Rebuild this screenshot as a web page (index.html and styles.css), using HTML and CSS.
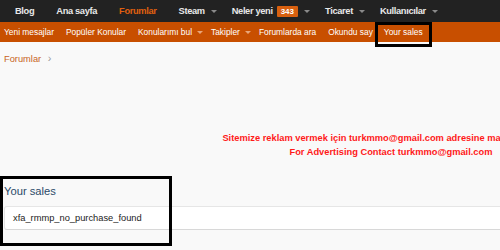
FILE: index.html
```html
<!DOCTYPE html>
<html lang="tr">
<head>
    <meta charset="UTF-8">
    <title>Your sales | Turkmmo</title>
    <link rel="stylesheet" href="styles.css">
</head>
<body>
    <nav class="topnav">
        <a href="#" class="nav-item">Blog</a>
        <a href="#" class="nav-item">Ana sayfa</a>
        <a href="#" class="nav-item active">Forumlar</a>
        <a href="#" class="nav-item has-menu">Steam <span class="caret"></span></a>
        <a href="#" class="nav-item has-menu">Neler yeni <span class="badge">343</span> <span class="caret"></span></a>
        <a href="#" class="nav-item has-menu">Ticaret <span class="caret"></span></a>
        <a href="#" class="nav-item has-menu">Kullanıcılar <span class="caret"></span></a>
    </nav>

    <nav class="subnav">
        <a href="#" class="sub-item">Yeni mesajlar</a>
        <a href="#" class="sub-item">Popüler Konular</a>
        <a href="#" class="sub-item has-menu">Konularımı bul <span class="caret light"></span></a>
        <a href="#" class="sub-item has-menu">Takipler <span class="caret light"></span></a>
        <a href="#" class="sub-item">Forumlarda ara</a>
        <a href="#" class="sub-item">Okundu say</a>
        <a href="#" class="sub-item marked">Your sales</a>
    </nav>

    <div class="breadcrumb">
        <a href="#">Forumlar</a> <span class="crumb-arrow">&rsaquo;</span>
    </div>

    <div class="ad-notice">
        <p>Sitemize reklam vermek için turkmmo@gmail.com adresine mail atabilirsiniz</p>
        <p>For Advertising Contact turkmmo@gmail.com</p>
    </div>

    <section class="sales">
        <h1 class="sales-title">Your sales</h1>
        <div class="sales-block">xfa_rmmp_no_purchase_found</div>
    </section>
</body>
</html>
```

FILE: styles.css
```css
body {
    margin: 0;
    background: #f9f9f9;
    font-family: "Liberation Sans", Arial, sans-serif;
    overflow: hidden;
}
a {
    text-decoration: none;
}

.topnav {
    display: flex;
    align-items: center;
    height: 22px;
    padding-left: 4px;
    background: #222222;
}
.nav-item {
    display: flex;
    align-items: center;
    padding: 0 11px;
    color: #e8e8e8;
    font-size: 9.3px;
    font-weight: bold;
    letter-spacing: -0.35px;
    white-space: nowrap;
}
.nav-item.has-menu {
    padding-right: 4px;
}
.nav-item.active {
    color: #e0600f;
}
.caret {
    display: inline-block;
    margin-left: 6px;
    border-left: 3px solid transparent;
    border-right: 3px solid transparent;
    border-top: 3px solid #8a8a8a;
}
.caret.light {
    margin-left: 5px;
    border-top-color: #e8a67a;
}
.badge {
    margin-left: 4px;
    padding: 1px 4px;
    background: #d9600f;
    color: #fff;
    font-size: 8px;
    letter-spacing: 0;
    border-radius: 1px;
}

.subnav {
    display: flex;
    align-items: center;
    height: 20px;
    padding-left: 4px;
    background: #c84f00;
}
.sub-item {
    display: flex;
    align-items: center;
    height: 100%;
    padding-right: 12px;
    color: #fff;
    font-size: 8.4px;
    white-space: nowrap;
}
.sub-item.has-menu {
    padding-right: 8px;
}
.sub-item.marked {
    position: relative;
    margin-left: -10px;
    padding: 0 9px;
}
.sub-item.marked::after {
    content: "";
    position: absolute;
    left: 0;
    right: 0;
    top: 0;
    height: 25px;
    border: 3px solid #000;
    box-sizing: border-box;
}

.breadcrumb {
    padding: 10px 4px 0;
    font-size: 9.3px;
}
.breadcrumb a {
    color: #c8641e;
}
.crumb-arrow {
    margin-left: 4px;
    color: #999;
    font-size: 11px;
}

.ad-notice {
    width: 782px;
    margin-top: 67px;
    text-align: center;
    color: #ff1a1a;
    font-size: 9.3px;
    font-weight: bold;
}
.ad-notice p {
    margin: 0;
    line-height: 14px;
}

.sales {
    position: relative;
    margin-top: 17px;
    padding-bottom: 16px;
}
.sales::after {
    content: "";
    position: absolute;
    left: 0;
    top: 0;
    width: 172px;
    height: 70px;
    border: 3px solid #000;
    box-sizing: border-box;
}
.sales-title {
    margin: 0;
    padding: 7px 4px 0;
    color: #2b4a68;
    font-size: 11.2px;
    font-weight: normal;
    line-height: 16px;
}
.sales-block {
    margin: 7px 0 0 4px;
    padding: 0 8px;
    height: 22px;
    line-height: 22px;
    background: #fff;
    border-top: 1px solid #e6e6e6;
    border-bottom: 1px solid #d8d8d8;
    border-left: 1px solid #e3e3e3;
    border-radius: 3px 0 0 3px;
    color: #222;
    font-size: 9.3px;
}
```
